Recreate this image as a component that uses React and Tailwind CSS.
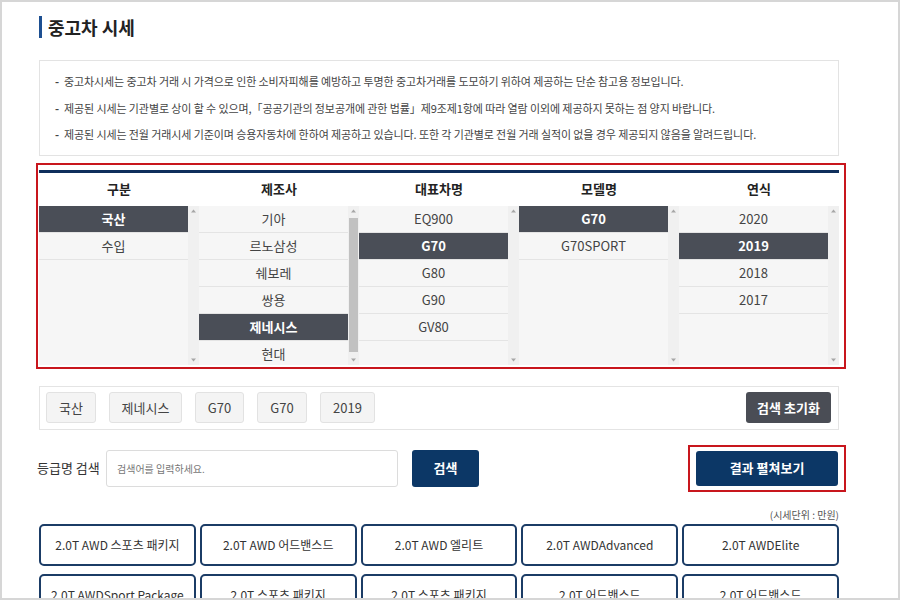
import React from "react";

const FONT = { fontFamily: '"Noto Sans CJK KR", "Noto Sans", sans-serif' };

const cols = [
  { h: "구분", items: ["국산", "수입"], sel: 0, thumb: false },
  { h: "제조사", items: ["기아", "르노삼성", "쉐보레", "쌍용", "제네시스", "현대"], sel: 4, thumb: true },
  { h: "대표차명", items: ["EQ900", "G70", "G80", "G90", "GV80"], sel: 1, thumb: false },
  { h: "모델명", items: ["G70", "G70SPORT"], sel: 0, thumb: false },
  { h: "연식", items: ["2020", "2019", "2018", "2017"], sel: 1, thumb: false },
];

const grid = [
  "2.0T AWD 스포츠 패키지",
  "2.0T AWD 어드밴스드",
  "2.0T AWD 엘리트",
  "2.0T AWDAdvanced",
  "2.0T AWDElite",
  "2.0T AWDSport Package",
  "2.0T 스포츠 패키지",
  "2.0T 스포츠 패키지",
  "2.0T 어드밴스드",
  "2.0T 어드밴스드",
];

function Scrollbar({ thumb }) {
  return (
    <div className="relative w-[11px] h-full bg-[#f0f0f0]">
      <svg className="absolute left-[3px] top-[3px]" width="5" height="4" viewBox="0 0 5 4">
        <path d="M0 3.5 L2.5 0.5 L5 3.5 Z" fill="#a6a6a6" />
      </svg>
      {thumb && <div className="absolute left-[1px] top-[12px] w-[9px] h-[134px] bg-[#c1c1c1]" />}
      <svg className="absolute left-[3px] bottom-[3px]" width="5" height="4" viewBox="0 0 5 4">
        <path d="M0 0.5 L2.5 3.5 L5 0.5 Z" fill="#a6a6a6" />
      </svg>
    </div>
  );
}

function Column({ c }) {
  return (
    <div className="w-[160px] flex flex-col">
      <div className="h-[33px] flex items-center justify-center text-[13px] font-bold text-[#222]">{c.h}</div>
      <div className="flex h-[159px]">
        <div className="w-[149px] h-full bg-[#f6f6f6] overflow-hidden">
          {c.items.map((it, i) => (
            <div
              key={i}
              className={
                i === c.sel
                  ? "h-[27px] flex items-center justify-center border-b border-[#e4e4e4] bg-[#4a4e57] text-white font-bold text-[13px]"
                  : "h-[27px] flex items-center justify-center border-b border-[#e4e4e4] text-[#444] text-[13px]"
              }
            >
              {it}
            </div>
          ))}
        </div>
        <Scrollbar thumb={c.thumb} />
      </div>
    </div>
  );
}

export default function App() {
  return (
    <div style={FONT} className="w-[900px] h-[600px] border-2 border-[#d6d6d6] bg-white overflow-hidden">
      <div className="w-[800px] ml-[37px]">
        {/* title */}
        <div className="mt-[14px] flex items-center h-[22px]">
          <div className="w-[3px] h-[22px] bg-[#1d4f91]" />
          <div className="ml-[6px] text-[18px] font-bold text-[#222] leading-[22px]">중고차 시세</div>
        </div>

        {/* info */}
        <div className="mt-[22px] border border-[#e3e3e3] py-[7px] pl-[15px] text-[11px] tracking-[-0.1px] text-[#444] leading-[26.5px]">
          <div className="flex"><span className="w-[9px] font-bold">-</span><span>중고차시세는 중고차 거래 시 가격으로 인한 소비자피해를 예방하고 투명한 중고차거래를 도모하기 위하여 제공하는 단순 참고용 정보입니다.</span></div>
          <div className="flex"><span className="w-[9px] font-bold">-</span><span>제공된 시세는 기관별로 상이 할 수 있으며,「공공기관의 정보공개에 관한 법률」제9조제1항에 따라 열람 이외에 제공하지 못하는 점 양지 바랍니다.</span></div>
          <div className="flex"><span className="w-[9px] font-bold">-</span><span>제공된 시세는 전월 거래시세 기준이며 승용자동차에 한하여 제공하고 있습니다. 또한 각 기관별로 전월 거래 실적이 없을 경우 제공되지 않음을 알려드립니다.</span></div>
        </div>

        {/* selector table */}
        <div className="mt-[7px] -ml-[3px] -mr-[7px] border-2 border-[#c8161d] pt-[5px] pl-[1px] pr-[5px] pb-[2px]">
          <div className="border-t-[3px] border-[#0f2f5c] flex">
            {cols.map((c, i) => (
              <Column key={i} c={c} />
            ))}
          </div>
        </div>

        {/* chips */}
        <div className="mt-[17px] border border-[#e4e4e4] h-[44px] px-[6px] flex items-center">
          <div className="flex gap-[13px] text-[13px] text-[#444]">
            <div className="w-[50px] h-[31px] flex items-center justify-center bg-[#f4f4f4] border border-[#e2e2e2] rounded-[3px]">국산</div>
            <div className="w-[73px] h-[31px] flex items-center justify-center bg-[#f4f4f4] border border-[#e2e2e2] rounded-[3px]">제네시스</div>
            <div className="w-[49px] h-[31px] flex items-center justify-center bg-[#f4f4f4] border border-[#e2e2e2] rounded-[3px]">G70</div>
            <div className="w-[50px] h-[31px] flex items-center justify-center bg-[#f4f4f4] border border-[#e2e2e2] rounded-[3px]">G70</div>
            <div className="w-[55px] h-[31px] flex items-center justify-center bg-[#f4f4f4] border border-[#e2e2e2] rounded-[3px]">2019</div>
          </div>
          <div className="ml-auto mr-[1px] w-[85px] h-[31px] flex items-center justify-center bg-[#4a4d55] rounded-[3px] text-white font-bold text-[13px]">검색 초기화</div>
        </div>

        {/* search row */}
        <div className="mt-[20px] flex items-center h-[37px]">
          <div className="w-[67px] text-[13px] text-[#333] -ml-[2px] whitespace-nowrap">등급명 검색</div>
          <div className="ml-[2px] w-[292px] h-[37px] border border-[#dcdcdc] rounded-[3px] flex items-center pl-[10px] text-[10px] text-[#777]">검색어를 입력하세요.</div>
          <div className="ml-[14px] w-[67px] h-[37px] bg-[#0c3766] rounded-[3px] flex items-center justify-center text-white font-bold text-[13px]">검색</div>
          <div className="ml-auto -mr-[7px] -my-[6px] border-2 border-[#c8161d] px-[6px] py-[4px]">
            <div className="w-[142px] h-[35px] bg-[#0c3766] rounded-[3px] flex items-center justify-center text-white font-bold text-[13px]">결과 펼쳐보기</div>
          </div>
        </div>

        {/* unit */}
        <div className="mt-[21px] h-[14px] flex justify-end items-center text-[10px] text-[#555]">(시세단위 : 만원)</div>

        {/* grid */}
        <div className="mt-[2px] grid grid-cols-5 gap-x-[4px] gap-y-[8px]">
          {grid.map((g, i) => (
            <div key={i} className="h-[42px] border-2 border-[#1b3c66] rounded-[5px] flex items-center justify-center text-[12px] text-[#333] bg-white">
              {g}
            </div>
          ))}
        </div>
      </div>
    </div>
  );
}
